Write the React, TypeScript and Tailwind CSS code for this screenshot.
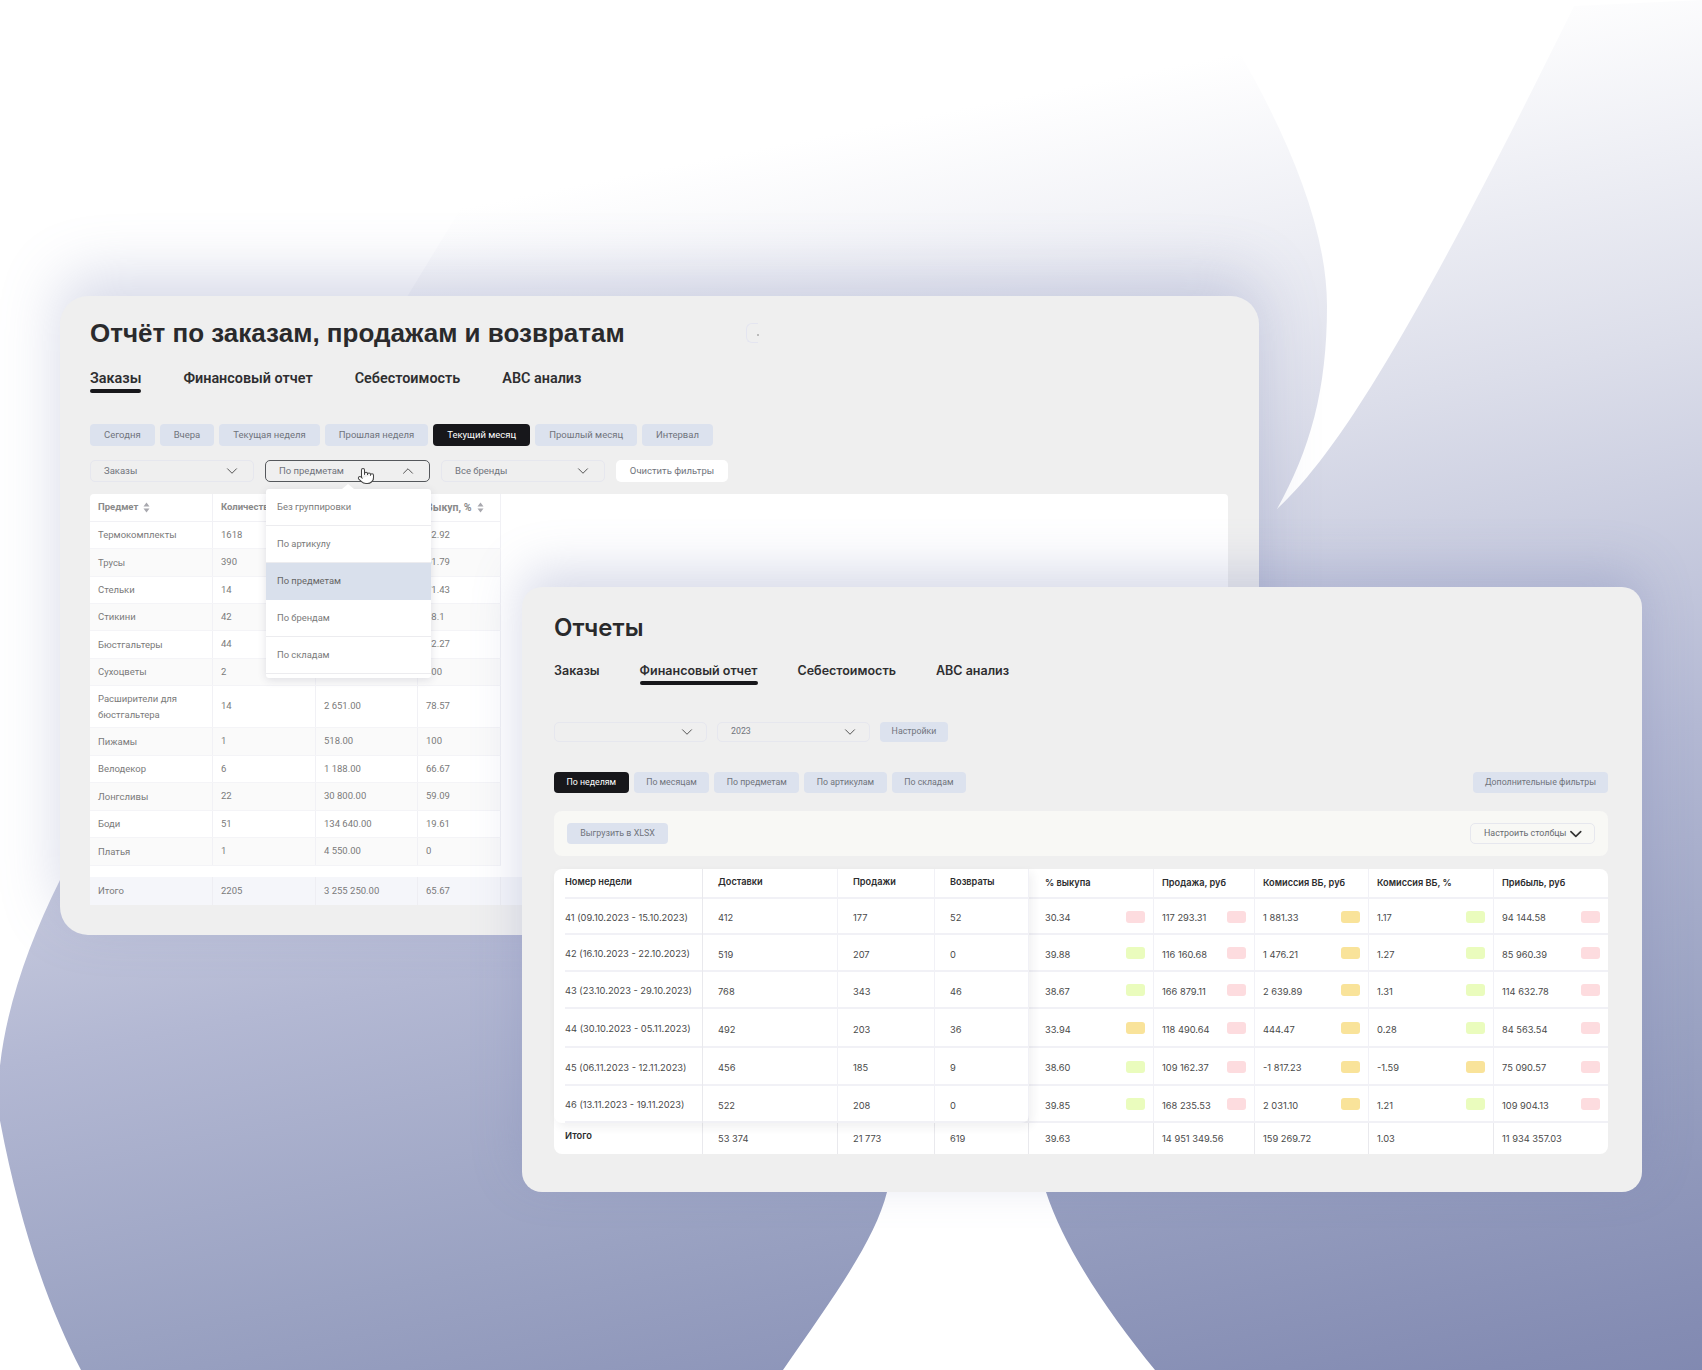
import { ChevronDown, ChevronUp, Pointer } from "lucide-react";

const ROBOTO = "font-['Roboto',Arial,sans-serif]";
const ARIAL = "font-['Liberation_Sans',Arial,sans-serif]";
const INTER = "font-['Inter',sans-serif]";

type Tone = "red" | "yellow" | "green";
type Cell = { value: string; tone: Tone };

const toneClasses: Record<Tone, string> = {
    red: "bg-[#fddcdf]",
    yellow: "bg-[#f9e39a]",
    green: "bg-[#eafcbd]",
};

const periodTabs = ["Сегодня", "Вчера", "Текущая неделя", "Прошлая неделя", "Текущий месяц", "Прошлый месяц", "Интервал"];
const groupOptions = ["Без группировки", "По артикулу", "По предметам", "По брендам", "По складам"];
const reportGroups = ["По неделям", "По месяцам", "По предметам", "По артикулам", "По складам"];

// name, count, sum, buyout, row height
const orderRows: [string, string, string, string, number][] = [
    ["Термокомплекты", "1618", "", "62.92", 27],
    ["Трусы", "390", "", "61.79", 28],
    ["Стельки", "14", "", "71.43", 27],
    ["Стикини", "42", "", "38.1", 27],
    ["Бюстгальтеры", "44", "", "52.27", 28],
    ["Сухоцветы", "2", "", "100", 27],
    ["Расширители для бюстгальтера", "14", "2 651.00", "78.57", 42],
    ["Пижамы", "1", "518.00", "100", 28],
    ["Велодекор", "6", "1 188.00", "66.67", 27],
    ["Лонгсливы", "22", "30 800.00", "59.09", 28],
    ["Боди", "51", "134 640.00", "19.61", 27],
    ["Платья", "1", "4 550.00", "0", 28],
];

const weekRows: { week: string; plain: string[]; cells: Cell[]; height: string }[] = [
    {
        week: "41 (09.10.2023 - 15.10.2023)",
        plain: ["412", "177", "52"],
        height: "h-[36px]",
        cells: [
            { value: "30.34", tone: "red" },
            { value: "117 293.31", tone: "red" },
            { value: "1 881.33", tone: "yellow" },
            { value: "1.17", tone: "green" },
            { value: "94 144.58", tone: "red" },
        ],
    },
    {
        week: "42 (16.10.2023 - 22.10.2023)",
        plain: ["519", "207", "0"],
        height: "h-[37px]",
        cells: [
            { value: "39.88", tone: "green" },
            { value: "116 160.68", tone: "red" },
            { value: "1 476.21", tone: "yellow" },
            { value: "1.27", tone: "green" },
            { value: "85 960.39", tone: "red" },
        ],
    },
    {
        week: "43 (23.10.2023 - 29.10.2023)",
        plain: ["768", "343", "46"],
        height: "h-[37px]",
        cells: [
            { value: "38.67", tone: "green" },
            { value: "166 879.11", tone: "red" },
            { value: "2 639.89", tone: "yellow" },
            { value: "1.31", tone: "green" },
            { value: "114 632.78", tone: "red" },
        ],
    },
    {
        week: "44 (30.10.2023 - 05.11.2023)",
        plain: ["492", "203", "36"],
        height: "h-[39px]",
        cells: [
            { value: "33.94", tone: "yellow" },
            { value: "118 490.64", tone: "red" },
            { value: "444.47", tone: "yellow" },
            { value: "0.28", tone: "green" },
            { value: "84 563.54", tone: "red" },
        ],
    },
    {
        week: "45 (06.11.2023 - 12.11.2023)",
        plain: ["456", "185", "9"],
        height: "h-[38px]",
        cells: [
            { value: "38.60", tone: "green" },
            { value: "109 162.37", tone: "red" },
            { value: "-1 817.23", tone: "yellow" },
            { value: "-1.59", tone: "yellow" },
            { value: "75 090.57", tone: "red" },
        ],
    },
    {
        week: "46 (13.11.2023 - 19.11.2023)",
        plain: ["522", "208", "0"],
        height: "h-[37px]",
        cells: [
            { value: "39.85", tone: "green" },
            { value: "168 235.53", tone: "red" },
            { value: "2 031.10", tone: "yellow" },
            { value: "1.21", tone: "green" },
            { value: "109 904.13", tone: "red" },
        ],
    },
];

const weekTotals = ["53 374", "21 773", "619", "39.63", "14 951 349.56", "159 269.72", "1.03", "11 934 357.03"];
const weekHeaders = ["Доставки", "Продажи", "Возвраты", "% выкупа", "Продажа, руб", "Комиссия ВБ, руб", "Комиссия ВБ, %", "Прибыль, руб"];
const weekGrid = "grid grid-cols-[149px_135px_97px_94px_125px_101px_114px_125px_114px]";

function Backdrop() {
    return (
        <svg className="absolute inset-0" width="1702" height="1370" viewBox="0 0 1702 1370" fill="none">
            <defs>
                <linearGradient id="backdropFill" gradientUnits="userSpaceOnUse" x1="0" y1="300" x2="288" y2="1742">
                    <stop offset="0" stopColor="#ffffff" />
                    <stop offset="0.25" stopColor="#dcdeea" />
                    <stop offset="0.51" stopColor="#b3b8d3" />
                    <stop offset="0.71" stopColor="#9aa2c2" />
                    <stop offset="0.91" stopColor="#848cb3" />
                    <stop offset="1" stopColor="#7c84ad" />
                </linearGradient>
            </defs>
            <path
                d="M478 180 L1238 50 C1290 140 1327 230 1327 306 C1327 390 1310 450 1277 509 C1330 460 1400 360 1574 6 L1702 0 L1702 1370 L1155 1370 C1110 1315 1065 1250 1046 1192 L960 1000 L887 1192 C875 1240 835 1295 783 1370 L81 1370 C50 1310 20 1230 -2 1110 C-4 1040 20 960 60 880 L407 297 Z"
                fill="url(#backdropFill)"
            />
        </svg>
    );
}

function Tab({ label, active = false, className = "" }: { label: string; active?: boolean; className?: string }) {
    return (
        <div className={`flex flex-col ${className}`}>
            <span className="leading-[20px] whitespace-nowrap">{label}</span>
            <span className={`h-[4px] rounded-full ${active ? "bg-[#17171b]" : ""}`} />
        </div>
    );
}

function Chip({ label, active = false, className = "" }: { label: string; active?: boolean; className?: string }) {
    return (
        <div
            className={`flex items-center justify-center rounded-[4px] whitespace-nowrap ${
                active ? "bg-[#17171b] text-white" : "bg-[#dce2ee] text-[#70747c]"
            } ${className}`}
        >
            {label}
        </div>
    );
}

function Select({ label, open = false, className = "" }: { label: string; open?: boolean; className?: string }) {
    const Icon = open ? ChevronUp : ChevronDown;
    return (
        <div
            className={`flex items-center justify-between rounded-[5px] border text-[#70747c] ${
                open ? "border-[#55585c]" : "border-[#e6e7ee]"
            } ${className}`}
        >
            <span className="whitespace-nowrap">{label}</span>
            <Icon size={18} strokeWidth={1.2} className="text-[#444]" />
        </div>
    );
}

function SortLabel({ label }: { label: string }) {
    return (
        <span className="inline-flex items-center gap-[5px] whitespace-nowrap">
            {label}
            <svg width="7" height="11" viewBox="0 0 7 11" fill="#a8a8ae">
                <path d="M3.5 0.5 L6.5 4.5 L0.5 4.5 Z" />
                <path d="M3.5 10.5 L0.5 6.5 L6.5 6.5 Z" />
            </svg>
        </span>
    );
}

function OrderTable() {
    const grid = "grid grid-cols-[123px_103px_102px_83px]";
    const cell = "flex items-center px-[8px] border-r border-[#f1f1f5]";
    return (
        <div className="flex bg-white rounded-t-[4px] mt-[12px] h-[410px] text-[9.5px] text-[#7a7a7a]">
            <div className="w-[411px] shrink-0">
                <div className={`${grid} h-[28px] border-b border-[#f1f1f5] font-bold text-[#8a8a8a]`}>
                    <div className={cell}>
                        <SortLabel label="Предмет" />
                    </div>
                    <div className={`${cell} overflow-hidden whitespace-nowrap`}>Количество</div>
                    <div className={cell} />
                    <div className={`${cell} text-[10.5px]`}>
                        <SortLabel label="Выкуп, %" />
                    </div>
                </div>
                {orderRows.map(([name, count, sum, buyout, height], i) => (
                    <div
                        key={name}
                        style={{ height }}
                        className={`${grid} border-b border-[#f4f4f7] ${i % 2 === 1 ? "bg-[#fafafa]" : "bg-white"}`}
                    >
                        <div className={`${cell} leading-[16px]`}>{name}</div>
                        <div className={cell}>{count}</div>
                        <div className={cell}>{sum}</div>
                        <div className={cell}>{buyout}</div>
                    </div>
                ))}
            </div>
        </div>
    );
}

function GroupDropdown() {
    return (
        <div className="absolute left-[206px] top-[193px] w-[165px] bg-white rounded-[3px] shadow-[0_2px_8px_rgba(60,60,90,0.14)] pb-[4px] text-[9.4px] text-[#7a7a7a]">
            <span className="absolute -top-[5px] left-[76px] size-0 border-x-[6px] border-b-[5px] border-x-transparent border-b-white" />
            {groupOptions.map((option, i) => (
                <div
                    key={option}
                    className={`flex items-center h-[37px] px-[11px] ${
                        i === 2 ? "bg-[#d9e0ec] text-[#666]" : "border-b border-[#ececef]"
                    }`}
                >
                    {option}
                </div>
            ))}
        </div>
    );
}

function OrdersPanel() {
    return (
        <section
            className={`absolute left-[60px] top-[296px] w-[1199px] h-[639px] rounded-[28px] bg-[#efefef] pl-[30px] pr-[31px] pt-[21px] shadow-[0_-20px_60px_rgba(120,130,180,0.3)] ${ROBOTO}`}
        >
            <div className="relative">
                <h1 className={`text-[26px] leading-[32px] font-bold text-[#2a2a2c] ${ARIAL}`}>Отчёт по заказам, продажам и возвратам</h1>
                <div className="absolute left-[656px] top-[6px] h-[20px] w-[12px] rounded-l-[6px] border border-r-0 border-[#e4e5f0]">
                    <span className="absolute -right-[1px] top-[10px] size-[2px] bg-[#bbb]" />
                </div>
            </div>
            <div className="flex gap-[42px] mt-[20px] text-[14.4px] font-semibold text-[#2e2e30]">
                <Tab label="Заказы" active />
                <Tab label="Финансовый отчет" />
                <Tab label="Себестоимость" />
                <Tab label="АВС анализ" />
            </div>
            <div className="flex gap-[5px] mt-[31px] text-[9.5px]">
                {periodTabs.map((label, i) => (
                    <Chip key={label} label={label} active={i === 4} className="h-[22px] px-[14px]" />
                ))}
            </div>
            <div className="flex gap-[11px] mt-[14px] text-[9.5px]">
                <Select label="Заказы" className="w-[164px] h-[22px] pl-[13px] pr-[12px]" />
                <Select label="По предметам" open className="w-[165px] h-[22px] pl-[13px] pr-[12px]" />
                <Select label="Все бренды" className="w-[164px] h-[22px] pl-[13px] pr-[12px]" />
                <div className="flex items-center justify-center w-[112px] h-[22px] bg-white rounded-[5px] text-[#70747c]">Очистить фильтры</div>
            </div>
            <OrderTable />
            <div className="absolute left-[30px] right-[31px] top-[581px] h-[28px] bg-[#f5f6fa] grid grid-cols-[123px_103px_102px_83px] text-[9.5px] text-[#7a7a7a]">
                {["Итого", "2205", "3 255 250.00", "65.67"].map((value) => (
                    <div key={value} className="flex items-center px-[8px] border-r border-[#eeeef3]">
                        {value}
                    </div>
                ))}
            </div>
            <GroupDropdown />
            <Pointer size={18} strokeWidth={1.4} className="absolute left-[297px] top-[171px] fill-white text-[#444]" />
        </section>
    );
}

function Badge({ tone }: { tone: Tone }) {
    return <span className={`w-[19px] h-[12px] rounded-[3px] -mt-[3px] ${toneClasses[tone]}`} />;
}

function WeekTable() {
    const line = "border-b-2 border-[#f1f1f6]";
    const divider = "border-r border-[#e9e9ed]";
    return (
        <div className={`relative mt-[13px] bg-white rounded-[8px] text-[9.3px] text-[#4a4a4a] ${INTER}`}>
            <div className={`${weekGrid} h-[30px] font-semibold text-[#2c2c2e] text-[9.2px]`}>
                <div className={`${divider}`}>
                    <div className={`flex items-center h-full ml-[11px] pb-[3px] ${line}`}>Номер недели</div>
                </div>
                {weekHeaders.map((label, i) => (
                    <div
                        key={label}
                        className={`flex items-center ${divider} last:border-r-0 ${line} ${
                            i < 3 ? "pb-[3px] pl-[15px]" : i === 3 ? "pl-[16px]" : "pl-[8px]"
                        }`}
                    >
                        {label}
                    </div>
                ))}
            </div>
            {weekRows.map((row) => (
                <div key={row.week} className={`${weekGrid} ${row.height}`}>
                    <div className={divider}>
                        <div className={`flex items-center h-full ml-[11px] pt-[3px] ${line} whitespace-nowrap`}>{row.week}</div>
                    </div>
                    {row.plain.map((value, i) => (
                        <div key={i} className={`flex items-center pl-[15px] pt-[4px] ${divider} ${line}`}>
                            {value}
                        </div>
                    ))}
                    {row.cells.map((cell, i) => (
                        <div
                            key={i}
                            className={`flex items-center justify-between pt-[4px] pr-[8px] ${i === 0 ? "pl-[16px]" : "pl-[8px]"} ${divider} last:border-r-0 ${line}`}
                        >
                            {cell.value}
                            <Badge tone={cell.tone} />
                        </div>
                    ))}
                </div>
            ))}
            <div className={`${weekGrid} h-[31px]`}>
                <div className={`flex items-center pl-[11px] pb-[5px] font-semibold text-[#2c2c2e] ${divider}`}>Итого</div>
                {weekTotals.map((value, i) => (
                    <div
                        key={value}
                        className={`flex items-center ${i < 3 ? "pl-[15px]" : i === 3 ? "pl-[16px]" : "pl-[8px]"} ${divider} last:border-r-0`}
                    >
                        {value}
                    </div>
                ))}
            </div>
            <div className="absolute left-0 top-0 w-[475px] h-[254px] rounded-b-[8px] pointer-events-none shadow-[3px_4px_10px_rgba(40,40,60,0.07)]" />
        </div>
    );
}

function ReportsPanel() {
    return (
        <section
            className={`absolute left-[522px] top-[587px] w-[1120px] h-[605px] rounded-[20px] bg-[#efefef] pl-[32px] pr-[34px] pt-[26px] shadow-[0_-16px_50px_rgba(120,130,180,0.3)] ${ROBOTO}`}
        >
            <h2 className={`text-[24px] leading-[30px] font-semibold text-[#2a2a2c] ${INTER}`}>Отчеты</h2>
            <div className={`flex gap-[40px] mt-[18px] text-[12.5px] font-semibold text-[#2e2e30] ${INTER}`}>
                <Tab label="Заказы" />
                <Tab label="Финансовый отчет" active />
                <Tab label="Себестоимость" />
                <Tab label="АВС анализ" />
            </div>
            <div className="flex gap-[10px] mt-[37px] text-[8.8px]">
                <Select label="" className="w-[153px] h-[20px] pl-[13px] pr-[10px]" />
                <Select label="2023" className="w-[153px] h-[20px] pl-[13px] pr-[10px]" />
                <Chip label="Настройки" className="h-[20px] w-[68px]" />
            </div>
            <div className="flex items-center gap-[5px] mt-[30px] text-[8.8px]">
                {reportGroups.map((label, i) => (
                    <Chip key={label} label={label} active={i === 0} className="h-[21px] px-[12.5px]" />
                ))}
                <Chip label="Дополнительные фильтры" className="ml-auto h-[21px] w-[135px]" />
            </div>
            <div className="flex items-center justify-between h-[45px] mt-[18px] px-[13px] rounded-[8px] bg-[#f8f8f5] text-[8.9px]">
                <Chip label="Выгрузить в XLSX" className="h-[21px] w-[101px]" />
                <div className="flex items-center justify-between w-[125px] h-[21px] pl-[13px] pr-[8px] rounded-[5px] border border-[#e6e7ee] text-[#66696f] whitespace-nowrap">
                    Настроить столбцы
                    <ChevronDown size={20} strokeWidth={2} className="text-[#333]" />
                </div>
            </div>
            <WeekTable />
        </section>
    );
}

export default function App() {
    return (
        <div className="relative w-[1702px] h-[1370px] overflow-hidden bg-white">
            <Backdrop />
            <OrdersPanel />
            <ReportsPanel />
        </div>
    );
}
